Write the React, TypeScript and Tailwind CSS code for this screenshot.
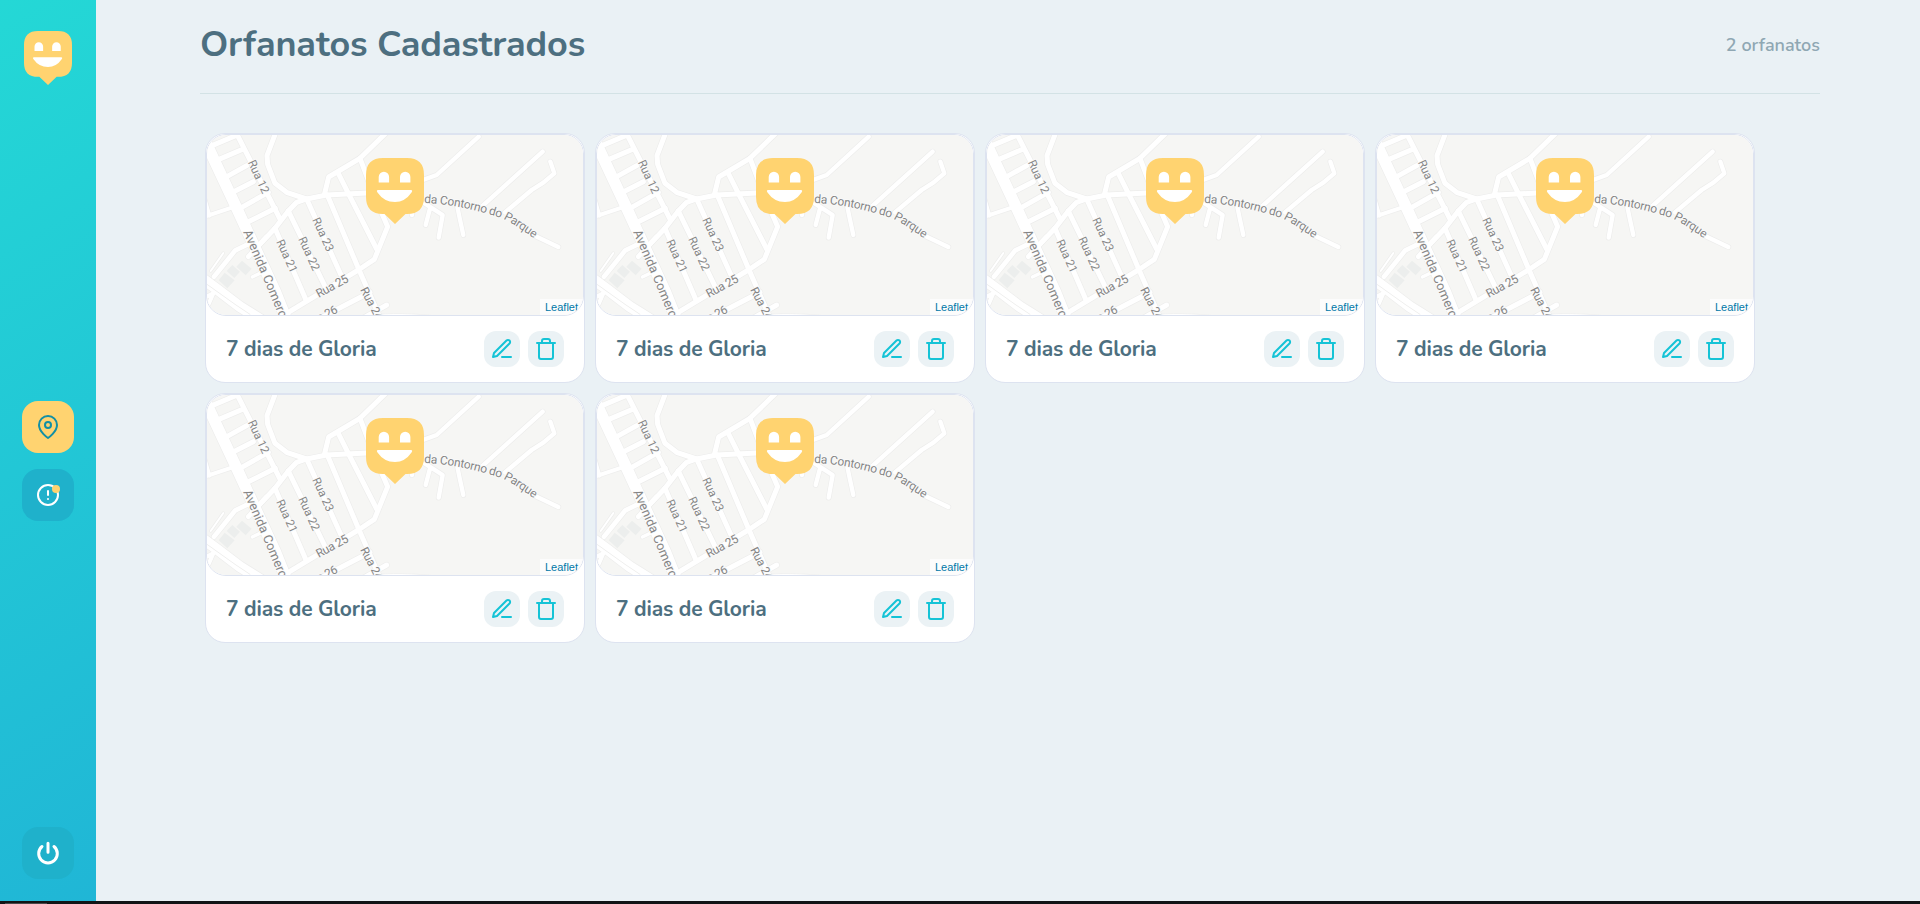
import { FiAlertCircle, FiEdit3, FiMapPin, FiTrash } from 'react-icons/fi';

const ROADS: { d: string; w: number }[] = [
  { d: 'M18 52L43 106L108 245L226 500L258 580', w: 34 },
  { d: 'M0 455L50 492L120 545L200 595', w: 32 },
  { d: 'M36 62L112 30L240 282', w: 15 },
  { d: 'M55 104L130 72M75 158L140 122M98 202L160 170M120 250L205 202M142 292L226 250', w: 15 },
  { d: 'M10 276L95 248M10 210L28 272', w: 12 },
  { d: 'M10 520L40 505L20 550', w: 12 },
  { d: 'M42 455L106 376L160 350M145 395L200 335', w: 14 },
  { d: 'M157 456L190 440', w: 10 },
  { d: 'M232 10L201 92L203 118L225 175L262 203L320 222', w: 15 },
  { d: 'M160 378L225 310L265 258L290 232L320 222L380 210L500 204L620 204', w: 15 },
  { d: 'M374 205L386 156L480 100L560 22', w: 15 },
  { d: 'M415 145L445 205L530 372', w: 15 },
  { d: 'M480 100L520 205L563 305L523 403L475 435L265 562', w: 15 },
  { d: 'M382 210L475 430L545 590', w: 15 },
  { d: 'M320 222L422 448', w: 15 },
  { d: 'M265 258L376 486', w: 15 },
  { d: 'M225 310L318 525', w: 15 },
  { d: 'M340 590L510 502M480 585L560 540', w: 15 },
  { d: 'M660 168L710 150L836 35', w: 13 },
  { d: 'M845 245L1028 80', w: 13 },
  { d: 'M915 262L995 195L1030 173L1063 145L1051 110', w: 13 },
  { d: 'M1008 334L1075 366', w: 13 },
  { d: 'M772 245L778 275L790 330', w: 13 },
  { d: 'M675 236L728 270L716 338M690 250L677 300M635 255L636 270', w: 13 },
];

const LABELS: { id: string; d: string; text: string; size: number; length: number }[] = [
  { id: 'rua12', d: 'M143 112L200 236', text: 'Rua 12', size: 35, length: 106 },
  { id: 'rua21', d: 'M228 350L286 476', text: 'Rua 21', size: 35, length: 106 },
  { id: 'rua22', d: 'M294 342L352 468', text: 'Rua 22', size: 35, length: 108 },
  { id: 'rua23', d: 'M336 284L394 410', text: 'Rua 23', size: 35, length: 108 },
  { id: 'rua25', d: 'M356 519L470 457', text: 'Rua 25', size: 36, length: 105 },
  { id: 'rua24', d: 'M480 494L543 614', text: 'Rua 24', size: 35, length: 106 },
  { id: 'rua26', d: 'M322 609L450 545', text: 'Rua 26', size: 36, length: 105 },
  { id: 'avenida', d: 'M129 321L183 446L269 650', text: 'Avenida Comercial', size: 38, length: 322 },
  {
    id: 'contorno',
    d: 'M672 233Q770 240 850 263L905 279Q945 298 1020 353',
    text: 'da Contorno do Parque',
    size: 36,
    length: 353,
  },
];

function Smiley({ className }: { className: string }) {
  return (
    <svg viewBox="0 0 58 66" preserveAspectRatio="none" className={className}>
      <path
        fill="#ffd370"
        d="M17 0H41Q58 0 58 17V39Q58 56 41 56H39.5L29 66L18.5 56H17Q0 56 0 39V17Q0 0 17 0Z"
      />
      <path
        fill="#fff"
        d="M12.7 24.400V19a5.200 5.200 0 0 1 10.400 0V24.400ZM34 24.400V19a5.200 5.200 0 0 1 10.400 0V24.400ZM12 32H45Q47 32 45.500 34.500Q39 44 29 44Q18 44 11.500 34.500Q10 32 12 32Z"
      />
    </svg>
  );
}

function StreetMap({ id }: { id: number }) {
  return (
    <svg viewBox="21 30 1128 540" className="block h-[180px] w-[376px]">
      <rect x="21" y="30" width="1128" height="540" fill="#f6f6f4" />
      <g fill="none" strokeLinejoin="round" strokeLinecap="round">
        {ROADS.map((r) => (
          <path key={r.d} d={r.d} stroke="#ededec" strokeWidth={r.w + 4} />
        ))}
        <path d="M32 438L70 384" stroke="#ededec" strokeWidth="10" />
        {ROADS.map((r) => (
          <path key={r.d} d={r.d} stroke="#fff" strokeWidth={r.w} />
        ))}
        <path d="M32 438L70 384" stroke="#fff" strokeWidth="6" />
        <path d="M21 478L105 538L150 568" stroke="#efefee" strokeWidth="3" />
      </g>
      <path
        d="M56 466L74 443L104 466L82 490ZM80 438L97 420L120 440L103 459ZM109 425L126 407L155 431L137 451Z"
        fill="#eceeed"
      />
      <path d="M500 575Q560 558 700 572V590H500Z" fill="#fff" stroke="#ededec" strokeWidth="2" />
      {LABELS.map((l) => (
        <g key={l.id}>
          <path id={`${l.id}-${id}`} d={l.d} fill="none" />
          <text
            fontSize={l.size}
            textLength={l.length}
            fill="#858585"
            stroke="#fafafa"
            strokeWidth="5"
            paintOrder="stroke"
            className="font-['Roboto',sans-serif]"
          >
            <textPath href={`#${l.id}-${id}`} textLength={l.length}>
              {l.text}
            </textPath>
          </text>
        </g>
      ))}
    </svg>
  );
}

function OrphanageCard({ id }: { id: number }) {
  return (
    <article className="h-[250px] w-[380px] overflow-hidden rounded-[20px] border border-[#dde3f0] bg-white">
      <div className="relative h-[182px] overflow-hidden rounded-[20px] border border-[#dde3f0]">
        <StreetMap id={id} />
        <Smiley className="absolute left-[159px] top-[23px] h-[66px] w-[58px]" />
        <a className="absolute bottom-0 right-0 h-4 bg-white/70 px-[5px] font-['Liberation_Sans',sans-serif] text-[11px] leading-4 text-[#0078a8]">
          Leaflet
        </a>
      </div>
      <div className="flex h-[66px] items-center justify-between px-5">
        <h2 className="text-[21px] font-bold leading-[34px] tracking-[-0.13px] text-[#4d6f80]">7 dias de Gloria</h2>
        <div className="flex gap-2 text-[#15c3d6]">
          <button className="flex size-9 items-center justify-center rounded-xl bg-[#ebf2f5]">
            <FiEdit3 size={24} />
          </button>
          <button className="flex size-9 items-center justify-center rounded-xl bg-[#ebf2f5]">
            <FiTrash size={24} />
          </button>
        </div>
      </div>
    </article>
  );
}

export default function App() {
  return (
    <div className="flex h-[904px] w-[1920px] flex-col overflow-hidden bg-[#eaf1f5] font-['Nunito',sans-serif]">
      <div className="flex h-[901px]">
        <aside className="flex w-24 shrink-0 flex-col items-center justify-between bg-[linear-gradient(329.54deg,#20b6d6_0%,#24d8d6_100%)] pb-[22px] pt-[31px]">
          <Smiley className="h-[54px] w-12" />
          <nav className="flex flex-col gap-4 pt-[9px]">
            <button className="flex size-[52px] items-center justify-center rounded-2xl bg-[#ffd370] text-[#128fa5]">
              <FiMapPin size={24} />
            </button>
            <button className="relative flex size-[52px] items-center justify-center rounded-2xl bg-[#1fb1cb] text-white">
              <FiAlertCircle size={24} />
              <span className="absolute left-[30px] top-4 size-2 rounded-full bg-[#ffd370]" />
            </button>
          </nav>
          <button className="flex size-[52px] items-center justify-center rounded-2xl bg-[#1fb1cb] text-white">
            <svg width="26" height="26" viewBox="0 0 26 26" fill="none" stroke="currentColor" strokeWidth="3" strokeLinecap="round">
              <path d="M13 3.200V12.200M7 6.500A9.300 9.300 0 1 0 19 6.500" />
            </svg>
          </button>
        </aside>
        <main className="flex flex-1 flex-col px-[100px] pl-[104px]">
          <header className="flex h-[94px] items-center justify-between border-b border-[#d3e2e5] pb-1">
            <h1 className="text-[36px] font-bold leading-[48px] tracking-[-0.14px] text-[#4d6f80]">
              Orfanatos Cadastrados
            </h1>
            <span className="pt-[2px] text-[18px] font-semibold text-[#8fa7b3]">2 orfanatos</span>
          </header>
          <section className="grid grid-cols-[repeat(4,380px)] gap-[10px] pl-[5px] pt-[39px]">
            {[1, 2, 3, 4, 5, 6].map((id) => (
              <OrphanageCard key={id} id={id} />
            ))}
          </section>
        </main>
      </div>
      <div className="flex h-[3px] items-end bg-[#121416] pl-[5px]">
        <div className="h-px w-[42px] bg-[#48484a]" />
      </div>
    </div>
  );
}
